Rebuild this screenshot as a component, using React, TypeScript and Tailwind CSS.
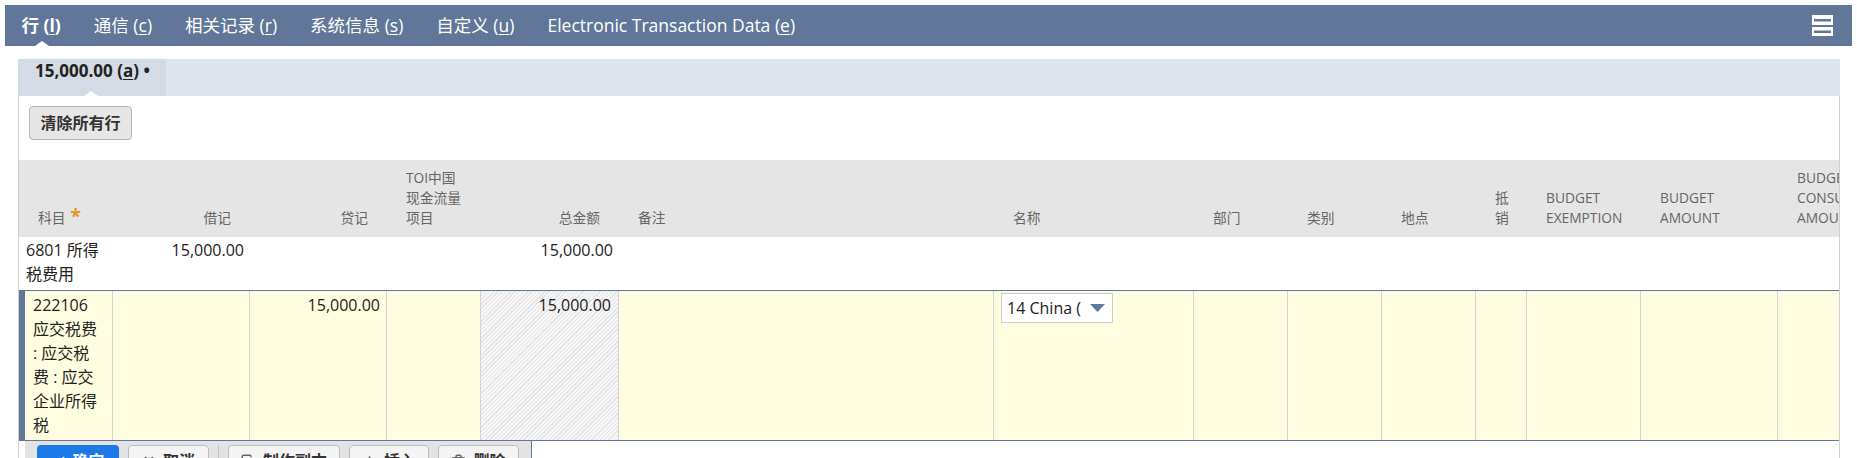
import { Check, X, Copy, Plus, Trash2 } from "lucide-react";

type Col = {
  w: string;
  head: string[];
  right?: boolean;
  star?: boolean;
};

const COLS: Col[] = [
  { w: "w-[94px]", head: ["科目"], star: true },
  { w: "w-[137px]", head: ["借记"], right: true },
  { w: "w-[137px]", head: ["贷记"], right: true },
  { w: "w-[94px]", head: ["TOI中国", "现金流量", "项目"] },
  { w: "w-[138px]", head: ["总金额"], right: true },
  { w: "w-[375px]", head: ["备注"] },
  { w: "w-[200px]", head: ["名称"] },
  { w: "w-[94px]", head: ["部门"] },
  { w: "w-[94px]", head: ["类别"] },
  { w: "w-[94px]", head: ["地点"] },
  { w: "w-[51px]", head: ["抵", "销"] },
  { w: "w-[114px]", head: ["BUDGET", "EXEMPTION"] },
  { w: "w-[137px]", head: ["BUDGET", "AMOUNT"] },
  { w: "w-[61px]", head: ["BUDGET", "CONSUMED", "AMOUNT"] },
];

const TABS = [
  { label: "行", key: "l" },
  { label: "通信", key: "c" },
  { label: "相关记录", key: "r" },
  { label: "系统信息", key: "s" },
  { label: "自定义", key: "u" },
  { label: "Electronic Transaction Data", key: "e" },
];

function Lines({ lines }: { lines: string[] }) {
  return (
    <>
      {lines.map((l, i) => (
        <div key={i} className="whitespace-nowrap">
          {l}
        </div>
      ))}
    </>
  );
}

function HeaderRow() {
  return (
    <div className="flex h-[77px] bg-[#e5e5e5] text-[13.75px] leading-[20px] text-[#666]">
      {COLS.map((c, i) => (
        <div
          key={i}
          className={`${c.w} shrink-0 overflow-hidden flex flex-col justify-end pb-[9px] ${
            c.right ? "items-end pr-[19px]" : "pl-[19px]"
          }`}
        >
          {c.star ? (
            <div className="whitespace-nowrap">
              科目
              <span className="ml-[5px] align-top text-[19px] leading-[16px] font-bold text-[#e0962a]">*</span>
            </div>
          ) : (
            <Lines lines={c.head} />
          )}
        </div>
      ))}
    </div>
  );
}

function FirstRow() {
  return (
    <div className="flex h-[53px] pt-[1px] text-[16px] leading-[24px] text-[#222]">
      <div className="w-[94px] shrink-0 pl-[7px]">
        <Lines lines={["6801 所得", "税费用"]} />
      </div>
      <div className="w-[137px] shrink-0 pr-[6px] text-right">15,000.00</div>
      <div className="w-[137px] shrink-0" />
      <div className="w-[94px] shrink-0" />
      <div className="w-[138px] shrink-0 pr-[6px] text-right">15,000.00</div>
    </div>
  );
}

function SelectedRow() {
  const cell = "shrink-0 border-r border-[#d4d4d4] pt-[2px]";
  return (
    <div className="flex h-[151px] border-y border-[#607799] bg-[#fefde0] text-[16px] leading-[24px] text-[#222]">
      <div className={`w-[94px] border-l-[6px] border-l-[#607799] pl-[8px] ${cell}`}>
        <Lines lines={["222106", "应交税费", ": 应交税", "费 : 应交", "企业所得", "税"]} />
      </div>
      <div className={`w-[137px] ${cell}`} />
      <div className={`w-[137px] pr-[6px] text-right ${cell}`}>15,000.00</div>
      <div className={`w-[94px] ${cell}`} />
      <div
        className={`w-[138px] pr-[7px] text-right bg-[repeating-linear-gradient(135deg,#e3e3e3_0px,#e3e3e3_1px,#f6f6f6_1px,#f6f6f6_3px)] ${cell}`}
      >
        15,000.00
      </div>
      <div className={`w-[375px] ${cell}`} />
      <div className={`w-[200px] pl-[7px] ${cell}`}>
        <div className="flex h-[30px] w-[112px] items-center border border-[#cccccc] bg-white pl-[5px]">
          <div className="w-[74px] overflow-hidden whitespace-nowrap">14 China (Shanghai)</div>
          <svg width="15" height="8" viewBox="0 0 15 8" className="ml-[9px]">
            <path d="M0 0 L15 0 L7.5 8 Z" fill="#607799" />
          </svg>
        </div>
      </div>
      <div className={`w-[94px] ${cell}`} />
      <div className={`w-[94px] ${cell}`} />
      <div className={`w-[94px] ${cell}`} />
      <div className={`w-[51px] ${cell}`} />
      <div className={`w-[114px] ${cell}`} />
      <div className={`w-[137px] ${cell}`} />
      <div className="w-[61px] shrink-0" />
    </div>
  );
}

function MachineButtons() {
  const btn =
    "h-[32px] shrink-0 flex items-center justify-center gap-[7px] rounded-[4px] border border-[#bdbdbd] bg-[#f4f4f4] text-[16px] font-semibold text-[#333]";
  return (
    <div className="ml-[6px] flex h-[40px] w-[507px] items-start gap-[9px] border-r border-[#607799] bg-[#e3e3e3] pl-[12px] pt-[4px]">
      <div className="flex h-[32px] w-[82px] shrink-0 items-center justify-center gap-[6px] rounded-[4px] bg-[#1b7ae8] text-[16px] font-semibold text-white">
        <Check size={15} strokeWidth={3} />
        确定
      </div>
      <div className={`${btn} w-[81px]`}>
        <X size={14} strokeWidth={3} className="text-[#666]" />
        取消
      </div>
      <div className="h-[32px] w-px shrink-0 bg-[#c4c4c4]" />
      <div className={`${btn} w-[112px]`}>
        <Copy size={15} strokeWidth={2.5} className="text-[#666]" />
        制作副本
      </div>
      <div className={`${btn} w-[80px]`}>
        <Plus size={15} strokeWidth={3} className="text-[#666]" />
        插入
      </div>
      <div className={`${btn} w-[81px]`}>
        <Trash2 size={15} strokeWidth={2.5} className="text-[#666]" />
        删除
      </div>
    </div>
  );
}

export default function App() {
  return (
    <div className="h-[458px] w-[1857px] overflow-hidden bg-white font-['Open_Sans','Noto_Sans_CJK_SC',sans-serif]">
      {/* tab bar */}
      <div className="relative mx-[5px] mt-[5px] flex h-[41px] items-center bg-[#607799] text-[17.5px] text-white">
        {TABS.map((t, i) => (
          <div key={t.key} className={`whitespace-nowrap px-[16.5px] ${i === 0 ? "font-bold" : ""}`}>
            {t.label} (<span className="underline underline-offset-2">{t.key}</span>)
          </div>
        ))}
        <div className="absolute bottom-0 left-[30px] h-0 w-0 border-x-[7px] border-b-[5px] border-x-transparent border-b-white" />
        <svg width="21" height="21" viewBox="0 0 21 21" className="ml-auto mr-[19px]">
          <rect x="0" y="0" width="21" height="10" fill="#fff" />
          <rect x="2" y="4" width="17" height="2.5" fill="#607799" />
          <rect x="0" y="12" width="21" height="9" fill="#fff" />
          <rect x="2" y="15.5" width="17" height="2.5" fill="#607799" />
        </svg>
      </div>

      <div className="ml-[18px] mt-[13px] w-[1822px]">
        {/* subtab strip */}
        <div className="flex h-[37px] bg-[#dfe4ed]">
          <div className="relative w-[148px] bg-[#d5dbe4] pl-[17px] pt-[1px] text-[17px] font-bold leading-[22px] text-[#222]">
            15,000.00 (<span className="underline underline-offset-2">a</span>) •
            <div className="absolute bottom-0 left-[66px] h-0 w-0 border-x-[7px] border-b-[5px] border-x-transparent border-b-white" />
          </div>
        </div>

        <div className="border-x border-[#d0d0d0] pb-[40px]">
          <div className="pl-[10px] pt-[10px]">
            <div className="flex h-[34px] w-[103px] items-center justify-center rounded-[4px] border border-[#b5b5b5] bg-[#e6e6e6] text-[16px] font-bold text-[#333]">
              清除所有行
            </div>
          </div>
          <div className="mt-[20px]">
            <HeaderRow />
            <FirstRow />
            <SelectedRow />
            <MachineButtons />
          </div>
        </div>
      </div>
    </div>
  );
}
